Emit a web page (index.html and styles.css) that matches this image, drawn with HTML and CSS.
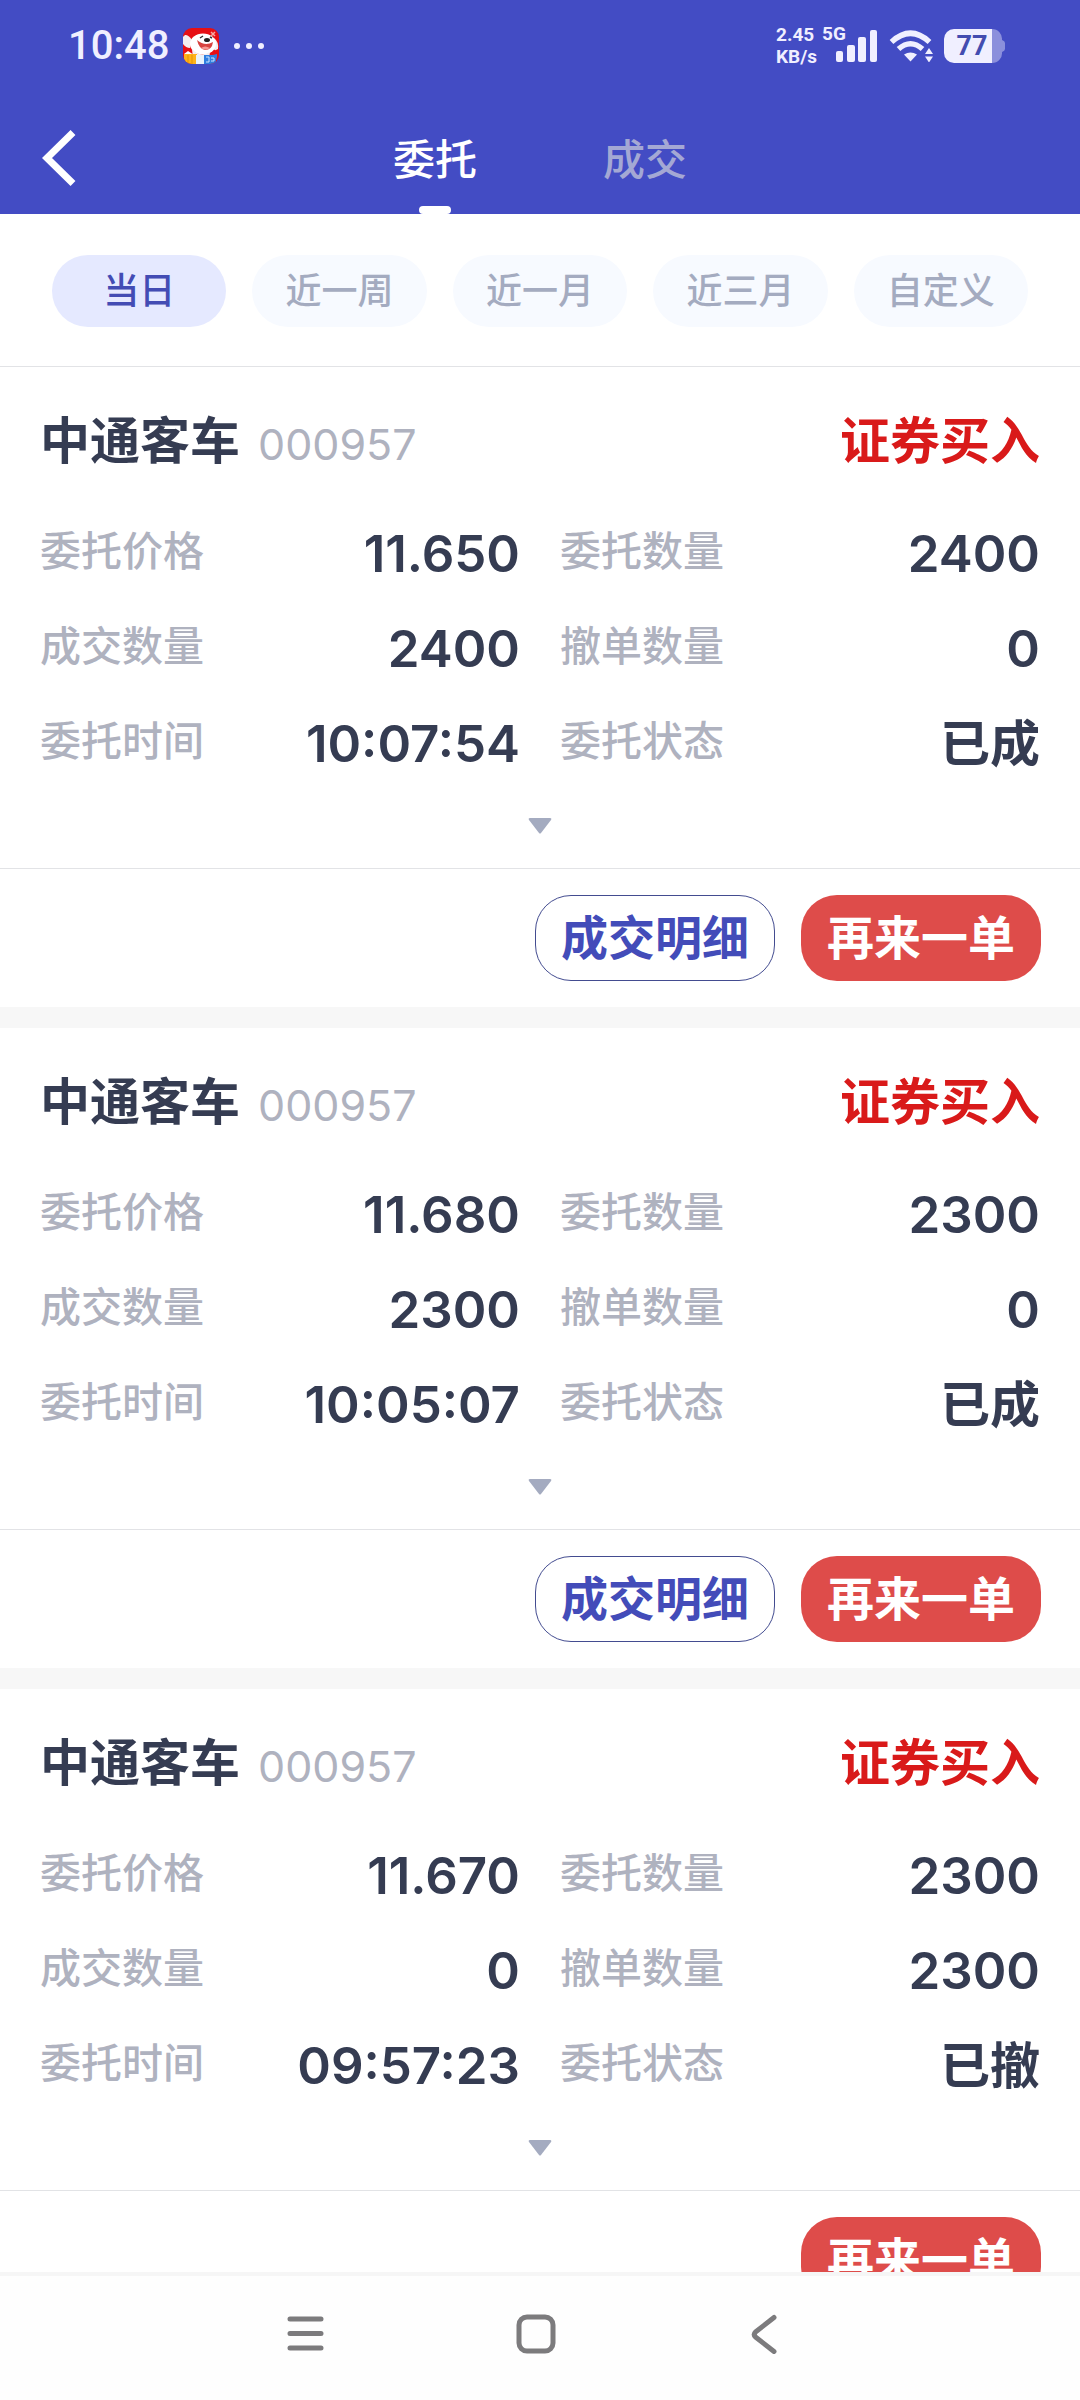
FILE: index.html
```html
<!DOCTYPE html>
<html lang="zh-CN">
<head>
<meta charset="utf-8">
<meta name="viewport" content="width=device-width, initial-scale=1">
<title>委托</title>
<link rel="stylesheet" href="styles.css">
</head>
<body>
<div class="app">
  <header class="header">
    <div class="status">
      <div class="status-side">
        <span class="clock">10:48</span>
        <svg class="app-icon" width="36" height="36" viewBox="0 0 36 36" aria-hidden="true">
          <defs><clipPath id="tile"><rect width="36" height="36" rx="9"/></clipPath></defs>
          <g clip-path="url(#tile)">
            <rect width="36" height="36" fill="#e60f14"/>
            <path d="M0 9C3 5 6 8 9 12L7 20Q3 20 0 16ZM31 10Q36 14 35 21Q31 24 29 19Z" fill="#f3eeee"/>
            <ellipse cx="20" cy="16" rx="13" ry="10.500" fill="#fff"/>
            <path d="M9 21Q17 30 27 24L26 31H10Z" fill="#f4f0f0"/>
            <path d="M14 12Q22 19 30 14Q29 22 22 22Q16 21 14 12Z" fill="#d8433f"/>
            <path d="M18 20Q22 17 27 20Q22 23 18 20Z" fill="#f59a94"/>
            <ellipse cx="24" cy="12" rx="3" ry="2" fill="#222"/>
            <path d="M17 10l3-2M27 9l2 1" stroke="#333" stroke-width="1.500"/>
            <path d="M28 4l4 4M32 4l-4 4" stroke="#f7a8a0" stroke-width="1.500"/>
            <path d="M1 26l4-3 6 4-2 3-8-2z" fill="#fff"/>
            <rect x="1" y="26" width="13" height="10" fill="#ffb21a"/>
            <path d="M5 27v9M9 27v9" stroke="#e59500"/>
            <rect x="13" y="27" width="9" height="9" fill="#e8f3fb"/>
            <path d="M21 27h9l4-1v3l-2 7H21z" fill="#2f7fe0"/>
            <path d="M23 29h3v5h-3M28 30h3v3h-3" stroke="#cfe4ff" fill="none"/>
          </g>
        </svg>
        <svg width="32" height="8" viewBox="0 0 32 8" fill="#f0efff" aria-hidden="true"><circle cx="4" cy="4" r="3"/><circle cx="16" cy="4" r="3"/><circle cx="28" cy="4" r="3"/></svg>
      </div>
      <div class="status-side status-right">
        <div class="speed"><span>2.45</span><span>KB/s</span></div>
        <div class="signal">
          <span class="network">5G</span>
          <svg class="bars" width="42" height="32" viewBox="0 0 42 32" fill="#f0efff" aria-hidden="true"><rect y="21" width="7" height="11" rx="2"/><rect x="11" y="15" width="8" height="17" rx="2"/><rect x="22" y="7" width="8" height="25" rx="2"/><rect x="34" width="7" height="32" rx="2"/></svg>
        </div>
        <svg width="44" height="32" viewBox="0 0 44 32" fill="#f0efff" aria-hidden="true">
          <path d="M2.500 12Q21.500-5.500 40.500 12" fill="none" stroke="#f0efff" stroke-width="5.500"/>
          <path d="M9.500 19Q21.500 8.500 33.500 19" fill="none" stroke="#f0efff" stroke-width="5.500"/>
          <path d="M15 24.500Q21.500 20.500 28 24.500L21.500 31.500Z"/>
          <path d="M36 24l4-6 4 6zM36 26.500h8l-4 6z"/>
        </svg>
        <svg width="61" height="34" viewBox="0 0 61 34" role="img" aria-label="电量 77%">
          <path d="M47 0h1a10 10 0 0 1 10 11q3 1 3 3v6q0 2-3 3a10 10 0 0 1-10 11h-1z" fill="#8b8fdc"/>
          <path d="M48 0H10A10 10 0 0 0 0 10V24A10 10 0 0 0 10 34H48z" fill="#f0efff"/>
          <text x="28" y="26" text-anchor="middle" class="battery-text">77</text>
        </svg>
      </div>
    </div>
    <nav class="topbar">
      <button class="back" type="button" aria-label="返回"><svg width="34" height="56" viewBox="0 0 34 56" fill="none" stroke="#fff" stroke-width="7"><path d="M31 2.500L5 28L31 53.500"/></svg></button>
      <div class="tabs">
        <button class="tab tab-active" type="button">委托</button>
        <button class="tab" type="button">成交</button>
      </div>
      <span class="topbar-end"></span>
    </nav>
  </header>

  <div class="filters">
    <button class="chip chip-active" type="button">当日</button>
    <button class="chip" type="button">近一周</button>
    <button class="chip" type="button">近一月</button>
    <button class="chip" type="button">近三月</button>
    <button class="chip" type="button">自定义</button>
  </div>

  <main class="orders">
    <article class="card">
      <div class="card-head"><h2 class="name">中通客车</h2><span class="code">000957</span><span class="side">证券买入</span></div>
      <dl class="fields">
        <div class="field"><dt>委托价格</dt><dd>11.650</dd></div>
        <div class="field"><dt>委托数量</dt><dd>2400</dd></div>
        <div class="field"><dt>成交数量</dt><dd>2400</dd></div>
        <div class="field"><dt>撤单数量</dt><dd>0</dd></div>
        <div class="field"><dt>委托时间</dt><dd>10:07:54</dd></div>
        <div class="field"><dt>委托状态</dt><dd class="state">已成</dd></div>
      </dl>
      <button class="expand" type="button" aria-label="展开"><svg width="24" height="16" viewBox="0 0 24 16"><path d="M2 0H22Q24 0 23 2L13 15Q12 16 11 15L1 2Q0 0 2 0Z" fill="#a4abc0"/></svg></button>
      <div class="actions"><button class="btn btn-outline" type="button">成交明细</button><button class="btn btn-fill" type="button">再来一单</button></div>
    </article>

    <article class="card">
      <div class="card-head"><h2 class="name">中通客车</h2><span class="code">000957</span><span class="side">证券买入</span></div>
      <dl class="fields">
        <div class="field"><dt>委托价格</dt><dd>11.680</dd></div>
        <div class="field"><dt>委托数量</dt><dd>2300</dd></div>
        <div class="field"><dt>成交数量</dt><dd>2300</dd></div>
        <div class="field"><dt>撤单数量</dt><dd>0</dd></div>
        <div class="field"><dt>委托时间</dt><dd>10:05:07</dd></div>
        <div class="field"><dt>委托状态</dt><dd class="state">已成</dd></div>
      </dl>
      <button class="expand" type="button" aria-label="展开"><svg width="24" height="16" viewBox="0 0 24 16"><path d="M2 0H22Q24 0 23 2L13 15Q12 16 11 15L1 2Q0 0 2 0Z" fill="#a4abc0"/></svg></button>
      <div class="actions"><button class="btn btn-outline" type="button">成交明细</button><button class="btn btn-fill" type="button">再来一单</button></div>
    </article>

    <article class="card">
      <div class="card-head"><h2 class="name">中通客车</h2><span class="code">000957</span><span class="side">证券买入</span></div>
      <dl class="fields">
        <div class="field"><dt>委托价格</dt><dd>11.670</dd></div>
        <div class="field"><dt>委托数量</dt><dd>2300</dd></div>
        <div class="field"><dt>成交数量</dt><dd>0</dd></div>
        <div class="field"><dt>撤单数量</dt><dd>2300</dd></div>
        <div class="field"><dt>委托时间</dt><dd>09:57:23</dd></div>
        <div class="field"><dt>委托状态</dt><dd class="state">已撤</dd></div>
      </dl>
      <button class="expand" type="button" aria-label="展开"><svg width="24" height="16" viewBox="0 0 24 16"><path d="M2 0H22Q24 0 23 2L13 15Q12 16 11 15L1 2Q0 0 2 0Z" fill="#a4abc0"/></svg></button>
      <div class="actions"><button class="btn btn-fill" type="button">再来一单</button></div>
    </article>
  </main>

  <nav class="system-nav">
    <button type="button" aria-label="最近任务"><svg width="40" height="40" viewBox="0 0 40 40" fill="none" stroke="#7c7b7d" stroke-width="5" stroke-linecap="round"><path d="M4 5H35M4 19.500H35M4 34H35"/></svg></button>
    <button type="button" aria-label="主屏幕"><svg width="40" height="40" viewBox="0 0 40 40" fill="none" stroke="#7c7b7d" stroke-width="5"><rect x="3" y="3" width="34" height="34" rx="8"/></svg></button>
    <button type="button" aria-label="返回"><svg width="40" height="40" viewBox="0 0 40 40" fill="none" stroke="#7c7b7d" stroke-width="5" stroke-linecap="round" stroke-linejoin="round"><path d="M28 3.500L9.500 18Q7 20.500 9.500 23L28 37.500"/></svg></button>
  </nav>
</div>
</body>
</html>
```
FILE: styles.css
```css
* { box-sizing: border-box; margin: 0; padding: 0; }

body {
  font-family: Inter, "Noto Sans CJK SC", sans-serif;
  font-weight: 500;
  color: #353c52;
  background: #fff;
}

button {
  font: inherit;
  color: inherit;
  background: none;
  border: 0;
  cursor: pointer;
}

svg { display: block; flex: none; }

.app { display: flex; flex-direction: column; height: 100vh; }

/* header */
.header { flex: none; background: #434cc4; color: #fff; }

.status {
  display: flex;
  justify-content: space-between;
  align-items: center;
  height: 92px;
  padding: 0 75px 0 68px;
  color: #f0efff;
  font-family: Roboto, sans-serif;
}
.status-side { display: flex; align-items: center; gap: 14px; }
.status-right { gap: 11px; }
.clock { font-size: 40px; font-weight: 500; line-height: 60px; }
.speed {
  display: flex;
  flex-direction: column;
  font-size: 19px;
  font-weight: 700;
  line-height: 22px;
}
.signal { position: relative; width: 56px; margin-left: -6px; }
.network {
  position: absolute;
  left: 0;
  top: -7px;
  font-size: 19px;
  font-weight: 700;
  line-height: 22px;
}
.bars { margin-left: 14px; }
.battery-text { font-size: 27px; font-weight: 700; fill: #434cb0; }

.topbar { display: flex; align-items: stretch; height: 122px; padding: 0 42px; }
.back { display: flex; align-items: center; width: 60px; padding-top: 10px; }
.topbar-end { width: 60px; }
.tabs { flex: 1; display: flex; justify-content: center; gap: 126px; }
.tab { position: relative; font-size: 42px; padding-top: 6px; color: #a4a8d4; }
.tab-active { color: #fff; }
.tab-active::after {
  content: "";
  position: absolute;
  left: 50%;
  bottom: 0;
  width: 32px;
  height: 8px;
  margin-left: -16px;
  border-radius: 4px;
  background: #fff;
}

/* date filters */
.filters {
  flex: none;
  display: flex;
  gap: 26px;
  padding: 41px 52px 39px;
  border-bottom: 1px solid #e2e3e6;
}
.chip {
  flex: 1;
  height: 72px;
  padding-bottom: 6px;
  border-radius: 36px;
  font-size: 36px;
  color: #a4abc0;
  background: #f7faff;
}
.chip-active { color: #434cb4; background: #e5e9ff; }

/* orders */
.orders {
  flex: 1;
  min-height: 0;
  display: flex;
  flex-direction: column;
  gap: 21px;
  overflow-y: auto;
  scrollbar-width: none;
  background: #f7f7f7;
}
.card { flex: none; background: #fff; }
.card-head { display: flex; align-items: center; height: 138px; padding: 10px 40px 0; }
.name { font-size: 50px; font-weight: 700; line-height: 72px; }
.code { margin-left: 18px; padding-top: 6px; font-size: 43px; font-weight: 400; color: #afb2bf; }
.side { margin-left: auto; font-size: 50px; font-weight: 700; line-height: 72px; color: #d91a1a; }

.fields { display: grid; grid-template-columns: 1fr 1fr; column-gap: 40px; padding: 0 40px; }
.field { display: flex; justify-content: space-between; align-items: center; height: 95px; }
.field dt { padding-bottom: 4px; font-size: 41px; line-height: 60px; color: #afb2bf; }
.field dd { padding-top: 2px; font-size: 51px; font-weight: 600; line-height: 72px; }
.field .state { font-size: 50px; }

.expand { display: flex; justify-content: center; align-items: center; width: 100%; height: 78px; padding-bottom: 7px; }

.actions {
  display: flex;
  justify-content: flex-end;
  gap: 26px;
  padding: 26px 39px;
  border-top: 1px solid #e2e3e6;
}
.btn { width: 240px; height: 86px; border-radius: 36px; font-size: 47px; font-weight: 700; line-height: 60px; }
.btn-outline { color: #434cb9; border: 1px solid #434c90; }
.btn-fill { color: #fff; background: #de4c4a; }

/* system navigation */
.system-nav {
  flex: none;
  display: flex;
  justify-content: center;
  gap: 190px;
  height: 128px;
  padding: 0 8px 8px 0;
  border-top: 4px solid #f6f6f6;
  background: #fefefe;
}
.system-nav button { display: flex; align-items: center; }
```
